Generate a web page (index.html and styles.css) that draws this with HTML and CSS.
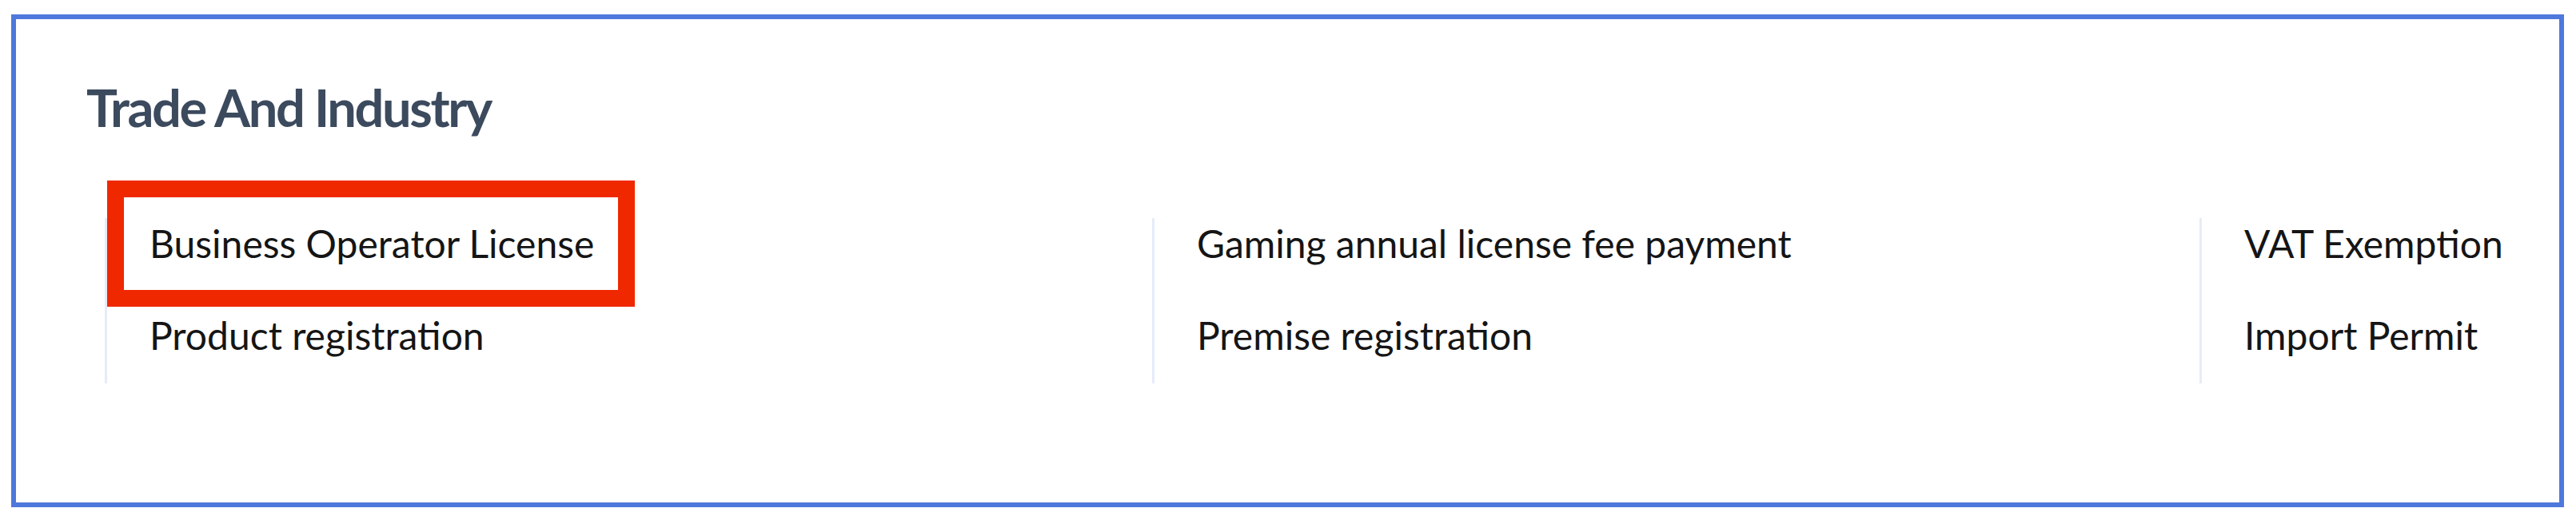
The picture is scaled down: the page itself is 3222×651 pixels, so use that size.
FILE: index.html
```html
<!DOCTYPE html>
<html lang="en">
<head>
<meta charset="utf-8">
<title>Trade And Industry</title>
<link rel="stylesheet" href="styles.css">
</head>
<body>
<section class="panel">
  <h2 class="panel-title">Trade And Industry</h2>
  <div class="service-grid">
    <ul class="service-col">
      <li class="service-item highlighted">Business Operator License<span class="highlight-frame"></span></li>
      <li class="service-item">Product registration</li>
    </ul>
    <ul class="service-col">
      <li class="service-item">Gaming annual license fee payment</li>
      <li class="service-item">Premise registration</li>
    </ul>
    <ul class="service-col">
      <li class="service-item">VAT Exemption</li>
      <li class="service-item">Import Permit</li>
    </ul>
  </div>
</section>
</body>
</html>
```
FILE: styles.css
```css
html, body {
  margin: 0;
  padding: 0;
  background: #ffffff;
}

body {
  padding: 18px 15px 0 14px;
  font-family: "Lato", "Liberation Sans", sans-serif;
}

.panel {
  height: 617px;
  box-sizing: border-box;
  border: 6px solid #4f78dc;
  padding: 71px 0 0 88px;
  background: #ffffff;
}

.panel-title {
  margin: 0;
  font-family: "Lato", "Liberation Sans", sans-serif;
  font-weight: 700;
  font-size: 65px;
  line-height: 78px;
  letter-spacing: -2.4px;
  color: #3c4a5e;
}

.service-grid {
  margin: 100px 0 0 23px;
  display: grid;
  grid-template-columns: 1310px 1310px minmax(0, 1fr);
}

.service-col {
  list-style: none;
  margin: 0;
  padding: 0 0 28px 53px;
  border-left: 3px solid #e6ecf8;
  display: flex;
  flex-direction: column;
  gap: 51px;
}

.service-item {
  font-size: 48px;
  line-height: 64px;
  color: #151515;
  white-space: nowrap;
}

.highlighted {
  position: relative;
}

.highlight-frame {
  position: absolute;
  left: -53px;
  top: -47px;
  width: 660px;
  height: 158px;
  box-sizing: border-box;
  border: 21px solid #ef2800;
  pointer-events: none;
}
```
